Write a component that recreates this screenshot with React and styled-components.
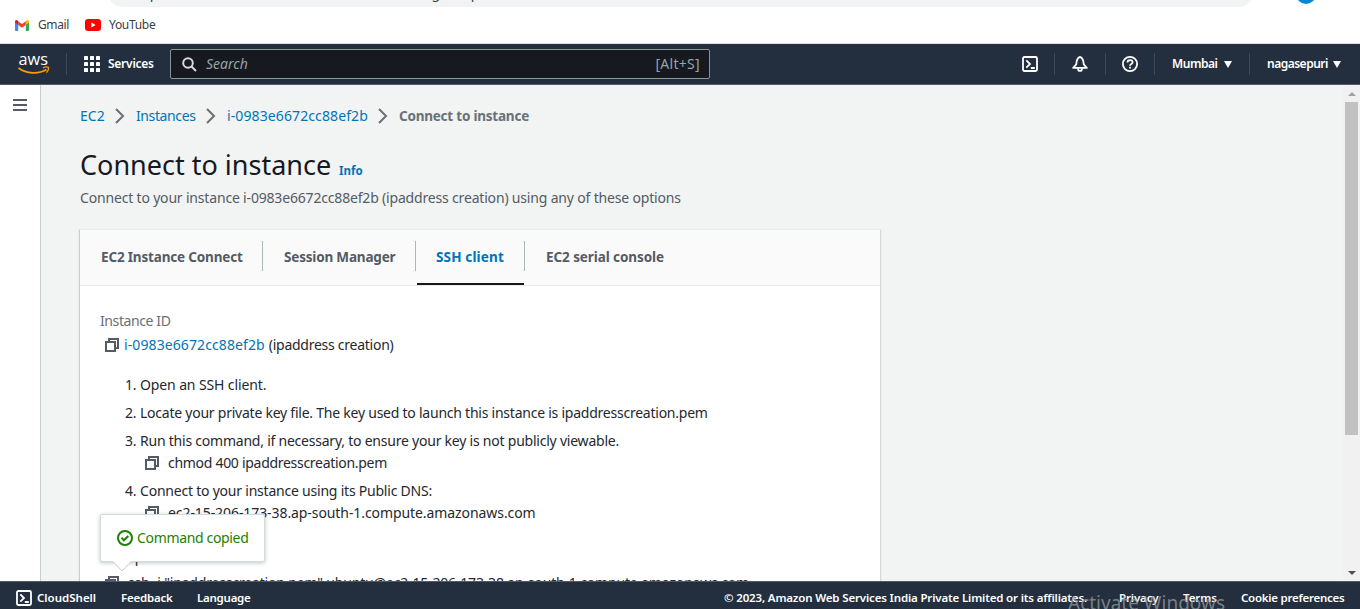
import React from 'react';
import styled, { createGlobalStyle } from 'styled-components';

const Global = createGlobalStyle`
  * { box-sizing: border-box; }
  html, body { margin: 0; height: 100%; overflow: hidden; background: #fff; }
  #root { height: 609px; }
  body { font-family: "Noto Sans", "Open Sans", sans-serif; font-size: 14px; line-height: 22px; color: #25282e; }
`;

const T = styled.span`
  display: inline-block;
  white-space: nowrap;
  font-size: ${(p) => p.$size || 14}px;
  font-weight: ${(p) => p.$weight || 400};
  font-style: ${(p) => (p.$italic ? 'italic' : 'normal')};
  color: ${(p) => p.$color || 'inherit'};
  letter-spacing: ${(p) => p.$ls || 0}px;
`;

const Screen = styled.div`
  width: 1360px;
  height: 609px;
  display: flex;
  flex-direction: column;
  overflow: hidden;
  position: relative;
`;

/* Browser chrome */
const Chrome = styled.div`
  height: 44px;
  flex: none;
  border-bottom: 1px solid #d9dce0;
`;
const Toolbar = styled.div`
  height: 7px;
  overflow: hidden;
  display: flex;
  align-items: flex-end;
  padding-left: 108px;
`;
const AddressBar = styled.div`
  flex: none;
  width: 1145px;
  height: 28px;
  border-radius: 14px;
  background: #f1f3f4;
  padding-left: 35px;
  color: #3c4043;
  line-height: 27px;
`;
const Avatar = styled.div`
  flex: none;
  width: 20px;
  height: 20px;
  margin: 0 0 3px 43px;
  border-radius: 50%;
  background: #0288d1;
`;
const Bookmarks = styled.div`
  height: 36px;
  display: flex;
  align-items: center;
  padding-left: 15px;
  color: #3c4043;
`;
const Bookmark = styled.div`
  display: flex;
  align-items: center;
  width: ${(p) => p.$w}px;
  gap: ${(p) => p.$gap}px;
`;

/* AWS top navigation */
const Nav = styled.header`
  height: 41px;
  flex: none;
  display: flex;
  align-items: center;
  background: #232f3e;
  border-bottom: 1px solid #545b64;
  color: #fff;
  padding-left: 17px;
`;
const Rule = styled.div`
  width: 1px;
  height: 22px;
  background: #414750;
`;
const NavItem = styled.div`
  display: flex;
  align-items: center;
  width: ${(p) => p.$w}px;
  padding-left: ${(p) => p.$pl || 0}px;
  gap: ${(p) => p.$gap || 0}px;
`;
const SearchBox = styled.div`
  width: 540px;
  height: 30px;
  border: 1px solid #879596;
  border-radius: 2px;
  background: #16191f;
  display: flex;
  align-items: center;
  padding: 0 9px 0 11px;
  color: #95a5a6;
  gap: 9px;
`;
const Spacer = styled.div`
  flex: 1;
`;
const Caret = styled.i`
  width: 0;
  height: 0;
  border: 4px solid transparent;
  border-top: 7px solid #fff;
  border-bottom: 0;
`;

/* Page body */
const Body = styled.div`
  flex: 1;
  min-height: 0;
  display: flex;
`;
const Rail = styled.nav`
  width: 41px;
  flex: none;
  background: #fff;
  border-right: 1px solid #c8cece;
  padding: 14px 0 0 13px;
`;
const Main = styled.main`
  flex: 1;
  background: #f2f3f3;
  padding: 20px 0 0 38px;
  overflow: hidden;
`;
const Crumbs = styled.div`
  display: flex;
  align-items: center;
  height: 22px;
  padding-left: 1px;
`;
const Crumb = styled.div`
  width: ${(p) => p.$w}px;
  display: flex;
  align-items: center;
  justify-content: space-between;
  margin-right: 11px;
`;
const Heading = styled.h1`
  margin: 19px 0 5px 1px;
  height: 36px;
  line-height: 36px;
  display: flex;
  align-items: baseline;
  font-weight: 400;
  color: #16191f;
`;
const HeadingText = styled.span`
  width: 259px;
`;
const Description = styled.p`
  margin: 0 0 20px 1px;
  height: 22px;
  color: #545b64;
`;
const Panel = styled.section`
  width: 802px;
  height: 420px;
  background: #fff;
  border: 1px solid #d5dbdb;
  border-top-color: #eaeded;
  border-left-color: #c8cece;
  box-shadow: 0 1px 1px rgba(0, 28, 36, 0.2);
`;
const Tabs = styled.div`
  display: flex;
  height: 56px;
  background: #fafafa;
  border-bottom: 1px solid #eaeded;
`;
const Tab = styled.div`
  width: ${(p) => p.$w}px;
  display: flex;
  flex-direction: column;
  color: ${(p) => (p.$active ? '#0073bb' : '#545b64')};
  &::after {
    content: '';
    margin: 12px 1px 0;
    height: 2px;
    background: ${(p) => (p.$active ? '#16191f' : 'transparent')};
  }
`;
const TabLabel = styled.div`
  height: 30px;
  margin-top: 11px;
  display: flex;
  align-items: center;
  padding: 2px 0 0 ${(p) => p.$pl || 21}px;
  border-right: 1px solid ${(p) => (p.$last ? 'transparent' : '#aab7b8')};
`;
const PanelBody = styled.div`
  padding: 24px 20px 0;
`;
const FieldName = styled.div`
  height: 22px;
  margin-bottom: 2px;
  color: #687078;
`;
const CopyRow = styled.div`
  display: flex;
  align-items: center;
  height: 22px;
  padding-left: ${(p) => p.$pl}px;
  gap: ${(p) => p.$gap}px;
`;
const Steps = styled.ol`
  list-style: none;
  margin: 18px 0 22px;
  padding: 0 0 0 25px;
`;
const Step = styled.li`
  margin-bottom: 6px;
  &:last-child { margin-bottom: 0; }
`;
const StepLine = styled.div`
  display: flex;
  height: 22px;
`;
const StepNo = styled.span`
  width: 15px;
  letter-spacing: -0.3px;
`;
const Example = styled.div`
  height: 22px;
  margin-bottom: 4px;
`;

const Popover = styled.div`
  position: absolute;
  left: 100px;
  top: 514px;
  width: 165px;
  height: 48px;
  background: #fff;
  border: 1px solid #d5dbdb;
  border-radius: 2px;
  box-shadow: 0 1px 4px rgba(0, 28, 36, 0.25);
  color: #1d8102;
  display: flex;
  align-items: center;
  padding-left: 16px;
  gap: 4px;
`;
const PopoverArrow = styled.svg`
  position: absolute;
  left: 10px;
  top: 45px;
`;

const Scrollbar = styled.div`
  width: 17px;
  flex: none;
  background: #f1f1f1;
  display: flex;
  flex-direction: column;
  align-items: center;
  padding: 6px 0 5px;
`;
const Thumb = styled.div`
  width: 13px;
  height: 333px;
  margin-top: 6px;
  background: #c1c1c1;
`;

const Footer = styled.footer`
  height: 28px;
  flex: none;
  border-top: 1px solid #545b64;
  background: #232f3e;
  color: #fff;
  display: flex;
  align-items: center;
  padding: 4px 16px 0;
`;
const FooterItem = styled.div`
  width: ${(p) => p.$w}px;
  display: flex;
  align-items: center;
  gap: 5px;
`;
const Watermark = styled.div`
  position: absolute;
  left: 1068px;
  top: 590px;
  color: rgba(150, 155, 160, 0.75);
  line-height: 27px;
`;

const CopyIcon = () => (
  <svg width="16" height="16" viewBox="0 0 16 16" fill="none" stroke="#545b64" strokeWidth="2">
    <path d="M2 5h9v9H2z" />
    <path d="M5 5V2h9v9h-3" />
  </svg>
);
const ShellIcon = () => (
  <svg width="16" height="16" viewBox="0 0 16 16" fill="none" stroke="#fff" strokeWidth="1.8">
    <rect x="1" y="1" width="14" height="14" rx="1.5" />
    <path d="M4.3 4.3 8 8l-3.7 3.7M8.8 12h4" />
  </svg>
);
const BellIcon = () => (
  <svg width="16" height="16" viewBox="0 0 16 16" fill="none" stroke="#fff" strokeWidth="1.8" strokeLinejoin="round">
    <path d="M1.2 11.9h13.600L11.700 8.300C11.700 4.500 10 1 8 1S4.300 4.500 4.300 8.300z" />
    <path d="M6 12.400c0 3.400 4 3.400 4 0" />
  </svg>
);
const HelpIcon = () => (
  <svg width="16" height="16" viewBox="0 0 16 16" fill="none" stroke="#fff" strokeWidth="1.8">
    <circle cx="8" cy="8" r="7.1" />
    <path d="M5.5 6.5C5.5 3.200 10.600 3.500 10.600 6.200 10.600 8 8 7.800 8 9.800M8 10.800v1.800" />
  </svg>
);
const Chevron = () => (
  <svg width="10" height="16" viewBox="0 0 10 16" fill="none" stroke="#687078" strokeWidth="2">
    <path d="M1 1l7 7-7 7" />
  </svg>
);
const AwsLogo = () => (
  <svg width="33" height="24" viewBox="0 0 33 24" overflow="visible">
    <text x="1.5" y="13" fontFamily="Open Sans, sans-serif" fontWeight="500" fontSize="17" textLength="29.5" lengthAdjust="spacingAndGlyphs" fill="#fff">aws</text>
    <path d="M1.5 16c8 6 20 6.500 28 1.600" fill="none" stroke="#f90" strokeWidth="1.8" />
    <path d="M26 15.800c2-1 4.200-1 5.500-.4.300 1.600-.3 3.700-2 5.300" fill="none" stroke="#f90" strokeWidth="1.3" />
  </svg>
);
const GmailIcon = () => (
  <svg width="14" height="11" viewBox="0 0 14 11">
    <path d="M0 2v8q0 1 1 1h2.2V4.5z" fill="#4285f4" />
    <path d="M14 2v8q0 1-1 1h-2.2V4.5z" fill="#34a853" />
    <path d="M10.8 1.2v3.7L14 2.5V1.6C14 0 12.3-.4 11.3.6z" fill="#fbbc04" />
    <path d="M0 1.6v.9l3.2 2.4V1.2L2.7.6C1.7-.4 0 0 0 1.6z" fill="#c5221f" />
    <path d="M3.2 1.2 7 4l3.800-2.800v3.700L7 7.700 3.200 4.900z" fill="#ea4335" />
  </svg>
);
const YouTubeIcon = () => (
  <svg width="16" height="12" viewBox="0 0 16 12">
    <rect width="16" height="12" rx="3" fill="#f00" />
    <path d="M6.4 3.5v5L10.6 6z" fill="#fff" />
  </svg>
);
const GridIcon = () => (
  <svg width="16" height="16" viewBox="0 0 16 16" fill="#fff">
    {[0, 6, 12].map((y) => [0, 6, 12].map((x) => <rect key={x + '-' + y} x={x} y={y} width="4" height="4" rx=".6" />))}
  </svg>
);
const SearchIcon = () => (
  <svg width="15" height="15" viewBox="0 0 15 15" fill="none" stroke="#d5dbdb" strokeWidth="2">
    <circle cx="6" cy="6" r="4.8" />
    <path d="m9.5 9.5 4.500 4.500" />
  </svg>
);
const MenuIcon = () => (
  <svg width="14" height="13" viewBox="0 0 14 13" fill="#545b64" display="block">
    <path d="M0 0h14v2H0zM0 5h14v2H0zM0 10h14v2H0z" />
  </svg>
);
const CheckIcon = () => (
  <svg width="16" height="16" viewBox="0 0 16 16" fill="none" stroke="#1d8102" strokeWidth="2">
    <circle cx="8" cy="8" r="7" />
    <path d="m4.5 7.8 2.500 2.500 4.300-4.300" />
  </svg>
);

const blue = '#0073bb';
const FooterText = ({ ls, children }) => <T $size={11.5} $weight={600} $ls={ls}>{children}</T>;
const TabText = ({ ls, children }) => <T $size={13.5} $weight={700} $ls={ls}>{children}</T>;

export default function App() {
  return (
    <Screen>
      <Global />
      <Chrome>
        <Toolbar>
          <AddressBar><T $ls={-1}>ap-south-1.console.aws.amazon.com/ec2/home?region=ap-south-1</T></AddressBar>
          <Avatar />
        </Toolbar>
        <Bookmarks>
          <Bookmark $w={70} $gap={9}><GmailIcon /><T $size={12} $ls={-0.38}>Gmail</T></Bookmark>
          <Bookmark $w={80} $gap={8}><YouTubeIcon /><T $size={12} $ls={-0.3}>YouTube</T></Bookmark>
        </Bookmarks>
      </Chrome>
      <Nav>
        <NavItem $w={49}><AwsLogo /></NavItem>
        <Rule />
        <NavItem $w={103} $pl={17} $gap={8}><GridIcon /><T $size={12} $weight={600} $ls={-0.25}>Services</T></NavItem>
        <SearchBox>
          <SearchIcon /><T $italic>Search</T><Spacer /><T $ls={0.3}>[Alt+S]</T>
        </SearchBox>
        <Spacer />
        <NavItem $w={32}><ShellIcon /></NavItem><Rule />
        <NavItem $w={50} $pl={17}><BellIcon /></NavItem><Rule />
        <NavItem $w={48} $pl={16}><HelpIcon /></NavItem><Rule />
        <NavItem $w={94} $pl={17} $gap={6}><T $size={12} $weight={600} $ls={-0.45}>Mumbai</T><Caret /></NavItem><Rule />
        <NavItem $w={110} $pl={17} $gap={5}><T $size={12} $weight={600} $ls={-0.5}>nagasepuri</T><Caret /></NavItem>
      </Nav>
      <Body>
        <Rail><MenuIcon /></Rail>
        <Main>
          <Crumbs>
            <Crumb $w={45}><T $color={blue}>EC2</T><Chevron /></Crumb>
            <Crumb $w={80}><T $color={blue} $ls={-0.39}>Instances</T><Chevron /></Crumb>
            <Crumb $w={161}><T $color={blue} $ls={0.11}>i-0983e6672cc88ef2b</T><Chevron /></Crumb>
            <T $size={13.5} $weight={700} $color="#687078" $ls={-0.22}>Connect to instance</T>
          </Crumbs>
          <Heading><HeadingText><T $size={27}>Connect to instance</T></HeadingText><T $size={11.5} $weight={700} $color={blue}>Info</T></Heading>
          <Description><T $ls={-0.178}>Connect to your instance i-0983e6672cc88ef2b (ipaddress creation) using any of these options</T></Description>
          <Panel>
            <Tabs>
              <Tab $w={183}><TabLabel><TabText ls={-0.17}>EC2 Instance Connect</TabText></TabLabel></Tab>
              <Tab $w={153}><TabLabel><TabText ls={-0.18}>Session Manager</TabText></TabLabel></Tab>
              <Tab $w={109} $active><TabLabel $pl={20}><TabText ls={0.15}>SSH client</TabText></TabLabel></Tab>
              <Tab $w={158}><TabLabel $last><TabText ls={-0.08}>EC2 serial console</TabText></TabLabel></Tab>
            </Tabs>
            <PanelBody>
              <FieldName><T $ls={-0.4}>Instance ID</T></FieldName>
              <CopyRow $pl={4} $gap={4}><CopyIcon /><T $color={blue} $ls={0.1}>i-0983e6672cc88ef2b</T><T $ls={-0.26}>(ipaddress creation)</T></CopyRow>
              <Steps>
                <Step><StepLine><StepNo>1.</StepNo><T $ls={-0.12}>Open an SSH client.</T></StepLine></Step>
                <Step><StepLine><StepNo>2.</StepNo><T $ls={-0.238}>Locate your private key file. The key used to launch this instance is ipaddresscreation.pem</T></StepLine></Step>
                <Step>
                  <StepLine><StepNo>3.</StepNo><T $ls={-0.226}>Run this command, if necessary, to ensure your key is not publicly viewable.</T></StepLine>
                  <CopyRow $pl={19} $gap={8}><CopyIcon /><T $ls={-0.292}>chmod 400 ipaddresscreation.pem</T></CopyRow>
                </Step>
                <Step>
                  <StepLine><StepNo>4.</StepNo><T $ls={-0.219}>Connect to your instance using its Public DNS:</T></StepLine>
                  <CopyRow $pl={19} $gap={8}><CopyIcon /><T $ls={-0.08}>ec2-15-206-173-38.ap-south-1.compute.amazonaws.com</T></CopyRow>
                </Step>
              </Steps>
              <Example><T $ls={-0.377}>Example:</T></Example>
              <CopyRow $pl={4} $gap={8}><CopyIcon /><T $ls={-0.171}>ssh -i "ipaddresscreation.pem" ubuntu@ec2-15-206-173-38.ap-south-1.compute.amazonaws.com</T></CopyRow>
            </PanelBody>
          </Panel>
        </Main>
        <Scrollbar>
          <svg width="8" height="5"><path d="M0 5 4 1l4 4z" fill="#a3a3a3" /></svg>
          <Thumb />
          <Spacer />
          <svg width="8" height="5"><path d="M0 0h8L4 4z" fill="#505050" /></svg>
        </Scrollbar>
      </Body>
      <Footer>
        <FooterItem $w={105}><ShellIcon /><FooterText>CloudShell</FooterText></FooterItem>
        <FooterItem $w={76}><FooterText ls={-0.22}>Feedback</FooterText></FooterItem>
        <FooterItem $w={80}><FooterText ls={-0.25}>Language</FooterText></FooterItem>
        <Spacer />
        <FooterItem $w={395}><FooterText ls={-0.155}>© 2023, Amazon Web Services India Private Limited or its affiliates.</FooterText></FooterItem>
        <FooterItem $w={64}><FooterText ls={-0.13}>Privacy</FooterText></FooterItem>
        <FooterItem $w={58}><FooterText ls={-0.05}>Terms</FooterText></FooterItem>
        <FooterItem $w={103}><FooterText ls={-0.25}>Cookie preferences</FooterText></FooterItem>
      </Footer>
      <Popover>
        <CheckIcon /><T $ls={-0.34}>Command copied</T>
        <PopoverArrow width="22" height="13" viewBox="0 0 22 13"><path d="M2 1.5 11 11l9-9.500V0H2z" fill="#fff" /><path d="M2 1.5 11 11l9-9.500" fill="none" stroke="#c8cece" /></PopoverArrow>
      </Popover>
      <Watermark><T $size={19}>Activate Windows</T></Watermark>
    </Screen>
  );
}
